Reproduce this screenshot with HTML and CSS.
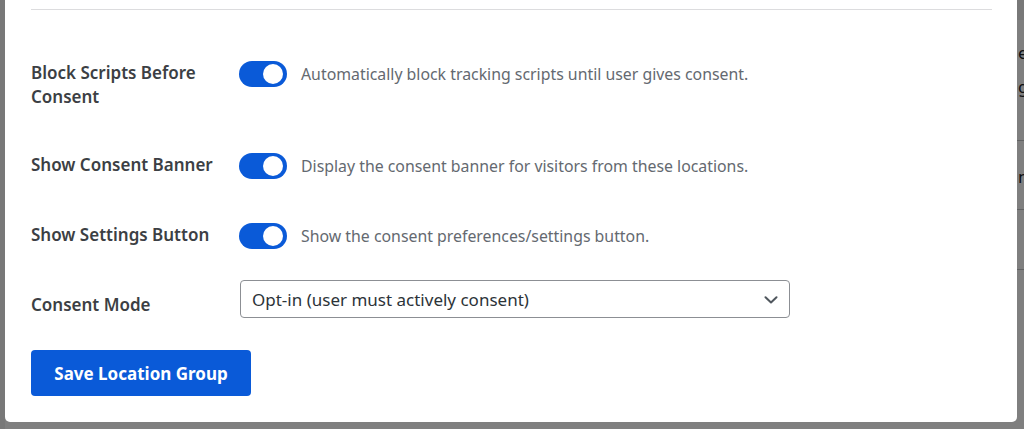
FILE: index.html
```html
<!DOCTYPE html>
<html lang="en">
<head>
<meta charset="utf-8">
<title>Location Group Settings</title>
<link rel="stylesheet" href="styles.css">
</head>
<body>
<div class="page">
  <div class="page-table">
    <div class="page-row page-row-a"><span class="page-text">er</span><br><span class="page-text">g</span></div>
    <div class="page-row page-row-b"><span class="page-text">ng</span></div>
    <div class="page-row page-row-c"></div>
  </div>
</div>
<div class="backdrop"></div>
<div class="modal">
  <div class="divider"></div>
  <div class="form">
    <div class="row row-first">
      <div class="label">Block Scripts Before Consent</div>
      <div class="control">
        <span class="toggle"><span class="knob"></span></span>
        <span class="desc">Automatically block tracking scripts until user gives consent.</span>
      </div>
    </div>
    <div class="row">
      <div class="label">Show Consent Banner</div>
      <div class="control">
        <span class="toggle"><span class="knob"></span></span>
        <span class="desc">Display the consent banner for visitors from these locations.</span>
      </div>
    </div>
    <div class="row">
      <div class="label">Show Settings Button</div>
      <div class="control">
        <span class="toggle"><span class="knob"></span></span>
        <span class="desc">Show the consent preferences/settings button.</span>
      </div>
    </div>
    <div class="row row-select">
      <div class="label label-select">Consent Mode</div>
      <div class="select">
        <span class="select-text">Opt-in (user must actively consent)</span>
        <svg class="chevron" width="14" height="8" viewBox="0 0 14 8"><path d="M1.5 1.2 L7 6.5 L12.5 1.2" fill="none" stroke="#50575e" stroke-width="2" stroke-linecap="round" stroke-linejoin="round"/></svg>
      </div>
    </div>
    <div class="actions">
      <button class="btn">Save Location Group</button>
    </div>
  </div>
</div>
</body>
</html>
```
FILE: styles.css
```css
* { box-sizing: border-box; }
html, body { margin: 0; padding: 0; }
body {
  width: 1024px;
  height: 429px;
  overflow: hidden;
  position: relative;
  background: #f0f0f1;
  font-family: "Noto Sans", "Open Sans", sans-serif;
}
.page {
  padding-left: 5px;
  padding-top: 20px;
}
.page-table {
  background: #fff;
  height: 409px;
}
.page-row {
  border-bottom: 1px solid #c3c4c7;
  padding-left: 1013px;
  color: #1d2327;
  font-size: 17px;
  white-space: nowrap;
  overflow: hidden;
}
.page-row-a { height: 121px; padding-top: 16px; line-height: 34px; }
.page-row-b { height: 69px; padding-top: 24px; line-height: 24px; }
.page-row-c { height: 60px; }
.backdrop {
  position: absolute;
  inset: 0;
  background: rgba(0, 0, 0, 0.5);
}
.modal {
  position: absolute;
  left: 5px;
  top: 0;
  width: 1012px;
  height: 422px;
  background: #fff;
  border-radius: 0 0 5px 5px;
  padding: 9px 25px 0 26px;
}
.divider {
  height: 1px;
  background: #dcdcde;
}
.form {
  display: flex;
  flex-direction: column;
}
.row {
  display: flex;
  align-items: flex-start;
  margin-top: 44px;
}
.row-first { margin-top: 51px; }
.row-select { margin-top: 31px; }
.label {
  width: 208px;
  flex: none;
  padding-right: 20px;
  font-size: 17px;
  font-weight: 600;
  line-height: 24px;
  color: #3c3f44;
}
.label-select { margin-top: 13px; }
.control {
  display: flex;
  align-items: center;
  gap: 14px;
  height: 26px;
}
.toggle {
  position: relative;
  display: block;
  width: 48px;
  height: 26px;
  border-radius: 13px;
  background: #0a5ad8;
  flex: none;
}
.knob {
  position: absolute;
  right: 4px;
  top: 3px;
  width: 20px;
  height: 20px;
  border-radius: 50%;
  background: #fff;
}
.desc {
  font-size: 15.85px;
  color: #646970;
  white-space: nowrap;
}
.select {
  width: 550px;
  height: 38px;
  margin-left: 1px;
  border: 1px solid #8c8f94;
  border-radius: 4px;
  display: flex;
  align-items: center;
  justify-content: space-between;
  padding: 0 11px 0 11px;
  background: #fff;
}
.select-text {
  font-size: 17px;
  color: #2c3338;
}
.chevron { display: block; margin-top: 2px; }
.actions {
  margin-top: 32px;
  display: flex;
}
.btn {
  width: 220px;
  height: 46px;
  border: none;
  border-radius: 4px;
  background: #0a5ad8;
  color: #fff;
  font-family: inherit;
  font-size: 17px;
  font-weight: 700;
  padding: 0;
}
```
